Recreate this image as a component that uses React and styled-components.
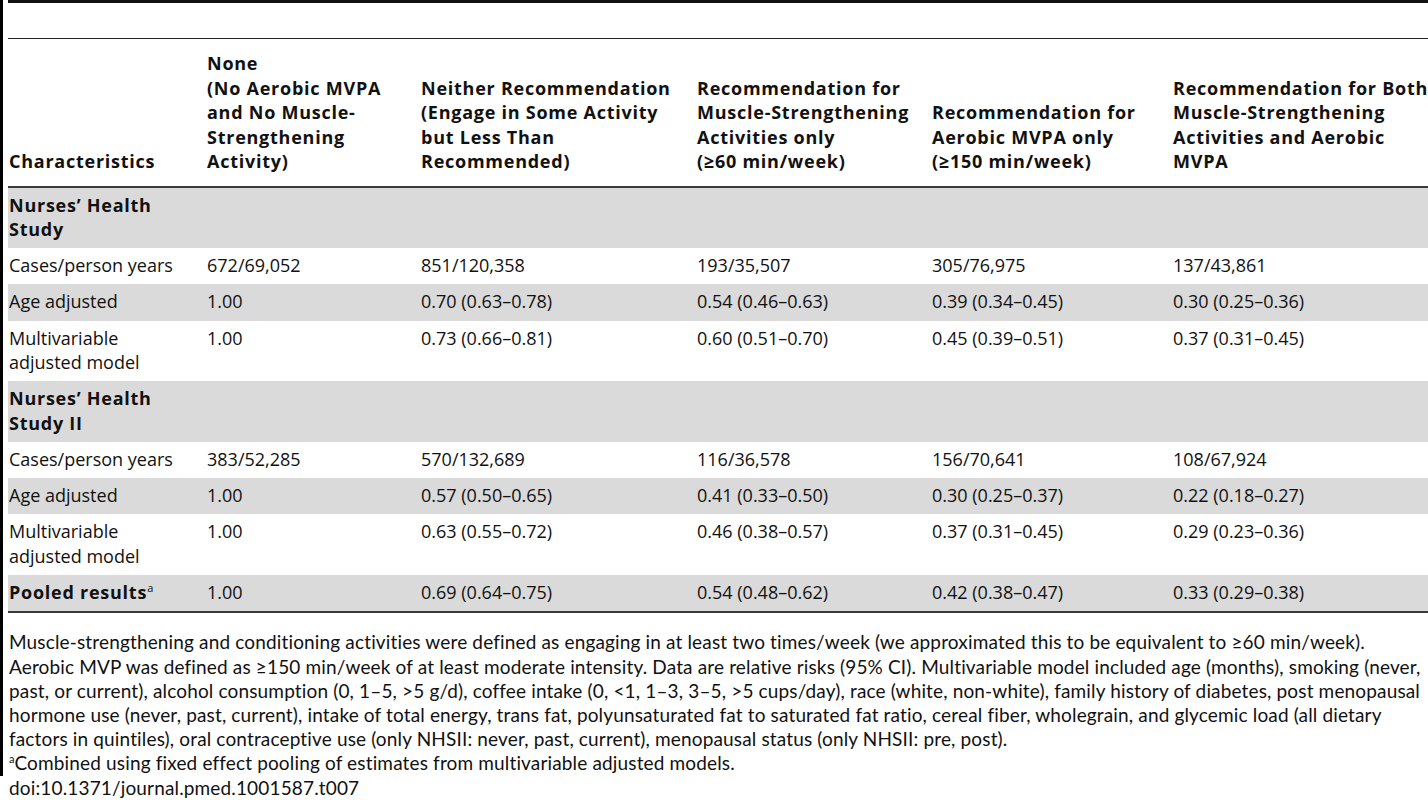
// Packages
import React from "react"
import styled, { createGlobalStyle } from "styled-components"

// Styles
const GlobalStyle = createGlobalStyle`
    html, body {
        margin: 0;
        padding: 0;
        background: #ffffff;
        overflow: hidden;
    }

    body {
        width: 1428px;
        height: 800px;
        font-family: "Open Sans", "DejaVu Sans", sans-serif;
        color: #111111;
    }
`

const Frame = styled.div`
    border-left: 3px solid #000000;
    padding-left: 5px;
    width: 1480px;
`

const TableBox = styled.div`
    border-top: 3px solid #111111;
    padding-top: 35px;
`

const Table = styled.table`
    border-collapse: collapse;
    table-layout: fixed;
    width: 1472px;
    font-size: 18px;
    line-height: 24.3px;
    border-top: 1px solid #222222;
    border-bottom: 2px solid #3a3a3a;
`

const HeadCell = styled.th`
    text-align: left;
    vertical-align: bottom;
    font-weight: 700;
    line-height: 24.5px;
    letter-spacing: 0.75px;
    white-space: nowrap;
    padding: 12px 0 12px ${(p) => (p.$first ? "1px" : "0")};
    border-bottom: 2px solid #3a3a3a;
`

const Row = styled.tr`
    background: ${(p) => (p.$shaded ? "#dadada" : "#ffffff")};
`

const Cell = styled.td`
    vertical-align: top;
    white-space: nowrap;
    padding: 5px 0 7px ${(p) => (p.$first ? "1px" : "0")};
    font-weight: ${(p) => (p.$bold ? 700 : 400)};
    letter-spacing: ${(p) => (p.$bold ? "0.75px" : "0")};
`

const Sup = styled.sup`
    font-weight: 400;
    font-size: 11px;
    line-height: 0;
    letter-spacing: 0;
    vertical-align: 7px;
`

const Notes = styled.div`
    padding-top: 17px;
    font-family: "Lato", "Liberation Sans", sans-serif;
    font-size: 19px;
    letter-spacing: 0.15px;
    line-height: 24.2px;
    padding-left: 1px;
`

const Line = styled.div`
    white-space: nowrap;
`

const Doi = styled(Notes)`
    padding-top: 0;
    padding-left: 9px;
`

// Data
const widths = [199, 214, 276, 235, 241, 307]

const headers = [
    ["Characteristics"],
    ["None", "(No Aerobic MVPA", "and No Muscle-", "Strengthening", "Activity)"],
    ["Neither Recommendation", "(Engage in Some Activity", "but Less Than", "Recommended)"],
    ["Recommendation for", "Muscle-Strengthening", "Activities only", "(≥60 min/week)"],
    ["Recommendation for", "Aerobic MVPA only", "(≥150 min/week)"],
    ["Recommendation for Both", "Muscle-Strengthening", "Activities and Aerobic", "MVPA"],
]

const rows = [
    { group: ["Nurses’ Health", "Study"] },
    { label: ["Cases/person years"], values: ["672/69,052", "851/120,358", "193/35,507", "305/76,975", "137/43,861"] },
    { label: ["Age adjusted"], shaded: true, values: ["1.00", "0.70 (0.63–0.78)", "0.54 (0.46–0.63)", "0.39 (0.34–0.45)", "0.30 (0.25–0.36)"] },
    { label: ["Multivariable", "adjusted model"], values: ["1.00", "0.73 (0.66–0.81)", "0.60 (0.51–0.70)", "0.45 (0.39–0.51)", "0.37 (0.31–0.45)"] },
    { group: ["Nurses’ Health", "Study II"] },
    { label: ["Cases/person years"], values: ["383/52,285", "570/132,689", "116/36,578", "156/70,641", "108/67,924"] },
    { label: ["Age adjusted"], shaded: true, values: ["1.00", "0.57 (0.50–0.65)", "0.41 (0.33–0.50)", "0.30 (0.25–0.37)", "0.22 (0.18–0.27)"] },
    { label: ["Multivariable", "adjusted model"], values: ["1.00", "0.63 (0.55–0.72)", "0.46 (0.38–0.57)", "0.37 (0.31–0.45)", "0.29 (0.23–0.36)"] },
    { pooled: true, shaded: true, values: ["1.00", "0.69 (0.64–0.75)", "0.54 (0.48–0.62)", "0.42 (0.38–0.47)", "0.33 (0.29–0.38)"] },
]

const notes = [
    "Muscle-strengthening and conditioning activities were defined as engaging in at least two times/week (we approximated this to be equivalent to ≥60 min/week).",
    "Aerobic MVP was defined as ≥150 min/week of at least moderate intensity. Data are relative risks (95% CI). Multivariable model included age (months), smoking (never,",
    "past, or current), alcohol consumption (0, 1–5, >5 g/d), coffee intake (0, <1, 1–3, 3–5, >5 cups/day), race (white, non-white), family history of diabetes, post menopausal",
    "hormone use (never, past, current), intake of total energy, trans fat, polyunsaturated fat to saturated fat ratio, cereal fiber, wholegrain, and glycemic load (all dietary",
    "factors in quintiles), oral contraceptive use (only NHSII: never, past, current), menopausal status (only NHSII: pre, post).",
]

const lines = (list) =>
    list.map((text, i) => (
        <React.Fragment key={i}>
            {i > 0 && <br />}
            {text}
        </React.Fragment>
    ))

function App() {
    return (
        <>
            <GlobalStyle />
            <Frame>
                <TableBox>
                    <Table>
                        <colgroup>
                            {widths.map((w, i) => (
                                <col key={i} style={{ width: w }} />
                            ))}
                        </colgroup>
                        <thead>
                            <tr>
                                {headers.map((h, i) => (
                                    <HeadCell key={i} $first={i === 0}>
                                        {lines(h)}
                                    </HeadCell>
                                ))}
                            </tr>
                        </thead>
                        <tbody>
                            {rows.map((row, r) =>
                                row.group ? (
                                    <Row key={r} $shaded>
                                        <Cell $first $bold>
                                            {lines(row.group)}
                                        </Cell>
                                        <Cell colSpan={5} />
                                    </Row>
                                ) : (
                                    <Row key={r} $shaded={row.shaded}>
                                        {row.pooled ? (
                                            <Cell $first $bold>
                                                Pooled results<Sup>a</Sup>
                                            </Cell>
                                        ) : (
                                            <Cell $first>{lines(row.label)}</Cell>
                                        )}
                                        {row.values.map((v, i) => (
                                            <Cell key={i}>{v}</Cell>
                                        ))}
                                    </Row>
                                )
                            )}
                        </tbody>
                    </Table>
                </TableBox>

                <Notes>
                    {notes.map((n, i) => (
                        <Line key={i}>{n}</Line>
                    ))}
                    <Line>
                        <Sup>a</Sup>Combined using fixed effect pooling of estimates from multivariable adjusted models.
                    </Line>
                </Notes>
            </Frame>
            <Doi>
                <Line>doi:10.1371/journal.pmed.1001587.t007</Line>
            </Doi>
        </>
    )
}

export default App
